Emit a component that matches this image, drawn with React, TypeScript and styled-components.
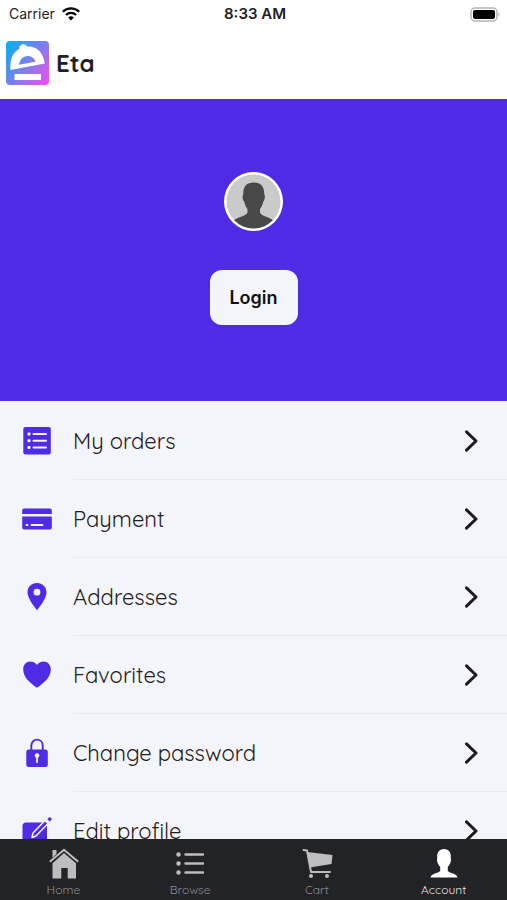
import React from "react";
import styled, { createGlobalStyle } from "styled-components";

const violet = "#4f2be6";
const paper = "#f4f5fa";
const ink = "#1f2023";
const rounded = `Quicksand, Lato, sans-serif`;
const system = `Inter, "Liberation Sans", sans-serif`;

const GlobalStyle = createGlobalStyle`
  *, *::before, *::after { box-sizing: border-box; }
  body { margin: 0; background: ${paper}; color: ${ink}; }
  svg { display: block; flex: none; }
`;

const Screen = styled.div`
  display: flex;
  flex-direction: column;
  height: 100vh;
  overflow: hidden;
  font-family: ${rounded};
`;

const StatusBar = styled.div`
  display: grid;
  grid-template-columns: 1fr auto 1fr;
  align-items: center;
  flex: none;
  height: 28px;
  padding: 0 6px 0 9px;
  background: #fff;
  font-family: ${system};
  font-size: 14px;
  line-height: 20px;
`;

const Carrier = styled.div`
  display: flex;
  align-items: center;
  gap: 7px;
`;

const Clock = styled.time`
  font-size: 15px;
  font-weight: 600;
`;

const BatterySlot = styled.div`
  display: flex;
  justify-content: flex-end;
`;

const Header = styled.header`
  display: flex;
  align-items: center;
  gap: 7px;
  flex: none;
  height: 71px;
  padding: 0 6px 2px;
  background: #fff;
`;

const Brand = styled.h1`
  margin: 0;
  font-size: 24px;
  line-height: 32px;
  font-weight: 700;
`;

const Hero = styled.section`
  display: flex;
  flex-direction: column;
  align-items: center;
  gap: 39px;
  flex: none;
  padding: 73px 16px 76px;
  background: ${violet};
`;

const LoginButton = styled.button`
  padding: 14px 16px;
  min-width: 88px;
  border: 0;
  border-radius: 12px;
  background: ${paper};
  color: #111;
  font-family: ${system};
  font-size: 18px;
  line-height: 27px;
  font-weight: 600;
  text-align: center;
`;

const Menu = styled.ul`
  flex: 1;
  min-height: 0;
  margin: 0;
  padding: 1px 0 0;
  overflow: hidden;
  list-style: none;
  background: ${paper};
`;

const MenuLink = styled.a`
  display: flex;
  align-items: center;
  gap: 21px;
  height: 78px;
  padding-left: 22px;
  color: ${ink};
  text-decoration: none;
`;

const MenuBody = styled.span`
  display: flex;
  align-items: center;
  justify-content: space-between;
  flex: 1;
  height: 78px;
  padding-right: 28px;
  border-bottom: 1px solid #e8e9ed;
  font-size: 22px;
  line-height: 28px;
`;

const TabBar = styled.nav`
  display: grid;
  grid-template-columns: repeat(4, 1fr);
  flex: none;
  height: 61px;
  background: #222327;
`;

const Tab = styled.a<{ $active?: boolean }>`
  display: flex;
  flex-direction: column;
  align-items: center;
  gap: 2px;
  padding-top: 8px;
  color: ${(p) => (p.$active ? "#fff" : "#bdbdbf")};
  font-size: 12px;
  line-height: 18px;
  text-decoration: none;
`;

const TabLabel = styled.span<{ $active?: boolean }>`
  color: ${(p) => (p.$active ? "#e4e4e6" : "#8d8d91")};
`;

const Wifi = () => (
  <svg width="18" height="14" viewBox="0 0 18 14" fill="none" stroke="#000" strokeWidth="2.2" aria-hidden="true">
    <path d="M.8 4.8C5.5.3 12.5.3 17.2 4.8" />
    <path d="M3.9 8C6.8 5.200 11.200 5.200 14.100 8" />
    <path d="M9 13.400 6.200 10.500Q9 8.100 11.800 10.500Z" fill="#000" stroke="none" />
  </svg>
);

const Battery = () => (
  <svg width="31" height="15" viewBox="0 0 31 15" aria-hidden="true">
    <rect x="1" y="1" width="26" height="13" rx="4" fill="#fff" stroke="#b5b5b5" strokeWidth="1.5" />
    <rect x="3" y="3" width="22" height="9" rx="2" fill="#000" />
    <path d="M28.500 5.500Q31 7.500 28.500 9.500Z" fill="#b5b5b5" />
  </svg>
);

const Logo = () => (
  <svg width="43" height="44" viewBox="0 0 43 44" aria-hidden="true">
    <defs>
      <linearGradient id="logoFill" x1="0" y1="0.1" x2="1" y2="0.9">
        <stop offset="0" stopColor="#08aef0" />
        <stop offset="0.5" stopColor="#7a80ea" />
        <stop offset="1" stopColor="#ed50f0" />
      </linearGradient>
    </defs>
    <rect width="43" height="44" rx="4" fill="url(#logoFill)" />
    <path
      fill="#fff"
      fillRule="evenodd"
      d="M4.500 29C3.500 19 6.500 11.500 13.500 7.500C13 3.500 18.500 1.500 21 5.500C30 4.500 37.500 11 38.800 22.500ZM13 23.800L29.500 20.800C27 13 15 12.500 13 23.800Z"
    />
    <rect x="8.500" y="33" width="26.500" height="6" fill="#fff" />
  </svg>
);

const Avatar = () => (
  <svg width="59" height="59" viewBox="0 0 59 59" role="img" aria-label="Guest avatar">
    <defs>
      <clipPath id="avatarClip">
        <circle cx="29.500" cy="29.500" r="27" />
      </clipPath>
    </defs>
    <circle cx="29.500" cy="29.500" r="29.500" fill="#fff" />
    <circle cx="29.500" cy="29.500" r="27" fill="#cacaca" />
    <path
      clipPath="url(#avatarClip)"
      fill="#484848"
      d="M29.700 10.500C37 10.500 40.500 14.500 40.200 22.500C41.500 23 40.800 28.500 39.300 29.500C38.700 33 37.500 35 36 37V40.500C38 45 46 44.500 49.500 49V59H9.500V49C13 44.500 21.500 45 23.500 40.500V37C22 35 20.800 33 20.200 29.500C18.500 28.500 18 23 19.300 22.500C19 14.500 22.500 10.500 29.700 10.500Z"
    />
  </svg>
);

const Chevron = () => (
  <svg width="15" height="24" viewBox="0 0 15 24" fill="none" stroke="#1b1b1e" strokeWidth="3" strokeLinecap="round" strokeLinejoin="round" aria-hidden="true">
    <path d="M2.500 2.800 12 12 2.500 21.200" />
  </svg>
);

const IconFrame = ({ children }: { children: React.ReactNode }) => (
  <svg width="30" height="30" viewBox="0 0 30 30" fill={violet} aria-hidden="true">
    {children}
  </svg>
);

const OrdersIcon = () => (
  <IconFrame>
    <rect x="1.300" y="1" width="27.500" height="27.500" rx="2" />
    <path d="M11.500 8H24M11.500 14.800H24M11.500 21.500H24" stroke={paper} strokeWidth="2" strokeLinecap="round" />
    <g fill={paper}>
      <rect x="5.500" y="6.500" width="3" height="3" rx="1" />
      <rect x="5.500" y="13.300" width="3" height="3" rx="1" />
      <rect x="5.500" y="20" width="3" height="3" rx="1" />
    </g>
  </IconFrame>
);

const PaymentIcon = () => (
  <IconFrame>
    <path d="M2 4.500H28Q29.800 4.500 29.800 6.500V10H.2V6.500Q.2 4.500 2 4.500Z" />
    <path d="M.2 12.500H29.800V23.500Q29.800 25.500 28 25.500H2Q.2 25.500 .2 23.500Z" />
    <path d="M9.500 21H20.500M4.500 21H5.500" stroke={paper} strokeWidth="1.800" strokeLinecap="round" />
  </IconFrame>
);

const PinIcon = () => (
  <IconFrame>
    <path
      fillRule="evenodd"
      d="M15 1C20.500 1 24.500 5 24.500 10.300C24.500 15.500 20 22 15 28.200C10 22 5.500 15.500 5.500 10.300C5.500 5 9.500 1 15 1ZM15 6.800A3.400 3.400 0 1 0 15 13.600A3.400 3.400 0 1 0 15 6.800Z"
    />
  </IconFrame>
);

const HeartIcon = () => (
  <IconFrame>
    <path d="M15 5C17 2.300 19.300 1.500 21.500 1.500C25.800 1.500 28.800 5 28.800 9.500C28.800 18 21 23.500 15 27.800C9 23.500 1.200 18 1.200 9.500C1.200 5 4.200 1.500 8.500 1.500C10.700 1.500 13 2.300 15 5Z" />
  </IconFrame>
);

const LockIcon = () => (
  <IconFrame>
    <path d="M9.300 13V8C9.300 -.5 20.700 -.5 20.700 8V13" fill="none" stroke={violet} strokeWidth="1.900" />
    <rect x="4.300" y="11.500" width="21.500" height="17.500" rx="2.500" />
    <circle cx="15" cy="17.500" r="2.300" fill={paper} />
    <path d="M15 18V24" stroke={paper} strokeWidth="1.800" strokeLinecap="round" />
  </IconFrame>
);

const EditIcon = () => (
  <IconFrame>
    <path d="M4 6.500H21L25 10V29H4Q.5 29 .5 25.500V10Q.5 6.500 4 6.500Z" />
    <path d="M11 17 23 4.500 26 7.500 14 20 10 21.500Z" stroke={paper} strokeWidth="1.500" strokeLinejoin="round" />
    <path d="M25.300 3 27 1.500Q28.300 1 29.300 2Q30 3 29.300 4L27.500 5.500Z" />
  </IconFrame>
);

const HomeIcon = () => (
  <svg width="32" height="32" viewBox="0 0 32 32" fill="currentColor" aria-hidden="true">
    <path d="M5.500 3H9.500V7L5.500 10.800Z" />
    <path d="M2.800 14.800 17 2.800 31.200 14.800" fill="none" stroke="currentColor" strokeWidth="2" />
    <path d="M17 6 29 16.200V31.500H20.700V21H14.300V31.500H5.500V16.200Z" />
  </svg>
);

const BrowseIcon = () => (
  <svg width="32" height="32" viewBox="0 0 32 32" fill="currentColor" aria-hidden="true">
    <circle cx="4.500" cy="7.500" r="2.200" />
    <circle cx="4.500" cy="16.500" r="2.200" />
    <circle cx="4.500" cy="25.500" r="2.200" />
    <path d="M11.500 7.500H29M11.500 16.500H29M11.500 25.500H29" stroke="currentColor" strokeWidth="2.400" strokeLinecap="round" />
  </svg>
);

const CartIcon = () => (
  <svg width="32" height="32" viewBox="0 0 32 32" fill="currentColor" aria-hidden="true">
    <path d="M6 5 31.500 8 30.500 17 9 20.500Z" />
    <path d="M2.500 3 6 3.500 10 25H29" fill="none" stroke="currentColor" strokeWidth="2" strokeLinecap="round" strokeLinejoin="round" />
    <circle cx="10" cy="29" r="2" />
    <circle cx="26" cy="29" r="2" />
  </svg>
);

const AccountIcon = () => (
  <svg width="32" height="32" viewBox="0 0 32 32" fill="currentColor" aria-hidden="true">
    <path d="M16 2C21 2 23.300 5.500 22.800 11C23.500 15 21.500 18 19.800 20V24C22 26.500 28.500 26 29.500 30.500H2.500C3.500 26 10 26.500 12.200 24V20C10.500 18 8.500 15 9.200 11C8.700 5.500 11 2 16 2Z" />
  </svg>
);

const menuItems = [
  { label: "My orders", Icon: OrdersIcon },
  { label: "Payment", Icon: PaymentIcon },
  { label: "Addresses", Icon: PinIcon },
  { label: "Favorites", Icon: HeartIcon },
  { label: "Change password", Icon: LockIcon },
  { label: "Edit profile", Icon: EditIcon },
];

const tabs = [
  { label: "Home", Icon: HomeIcon },
  { label: "Browse", Icon: BrowseIcon },
  { label: "Cart", Icon: CartIcon },
  { label: "Account", Icon: AccountIcon, active: true },
];

export default function App() {
  return (
    <>
      <GlobalStyle />
      <Screen>
        <StatusBar>
          <Carrier>
            Carrier
            <Wifi />
          </Carrier>
          <Clock>8:33 AM</Clock>
          <BatterySlot>
            <Battery />
          </BatterySlot>
        </StatusBar>
        <Header>
          <Logo />
          <Brand>Eta</Brand>
        </Header>
        <Hero>
          <Avatar />
          <LoginButton type="button">Login</LoginButton>
        </Hero>
        <Menu>
          {menuItems.map(({ label, Icon }) => (
            <li key={label}>
              <MenuLink href="#">
                <Icon />
                <MenuBody>
                  {label}
                  <Chevron />
                </MenuBody>
              </MenuLink>
            </li>
          ))}
        </Menu>
        <TabBar>
          {tabs.map(({ label, Icon, active }) => (
            <Tab key={label} href="#" $active={active} aria-current={active ? "page" : undefined}>
              <Icon />
              <TabLabel $active={active}>{label}</TabLabel>
            </Tab>
          ))}
        </TabBar>
      </Screen>
    </>
  );
}
